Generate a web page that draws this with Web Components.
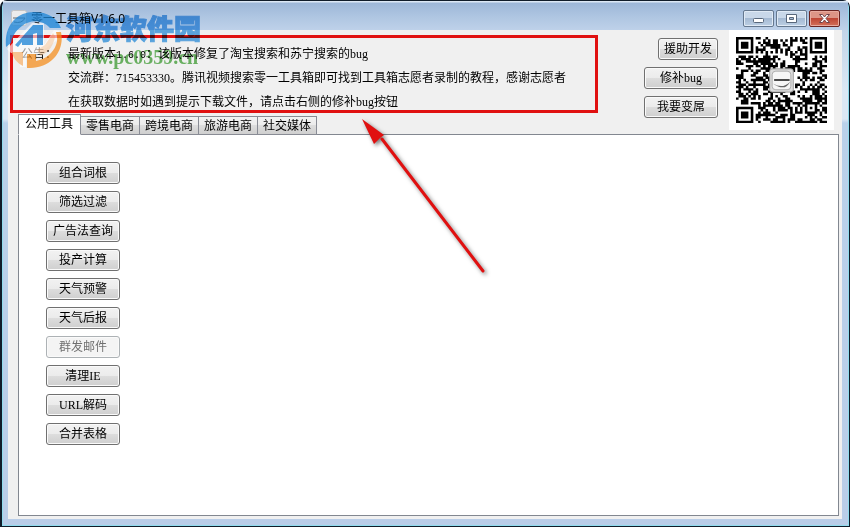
<!DOCTYPE html>
<html lang="zh-CN">
<head>
<meta charset="utf-8">
<title>零一工具箱V1.6.0</title>
<style>
  html, body {
    height: 100%;
    margin: 0;
  }
  body {
    font: 12px/16px "Liberation Serif", "Noto Sans CJK SC", serif;
    color: #000;
    overflow: hidden;
  }
  .actions {
    display: flex;
    flex-direction: column;
    align-items: flex-end;
    gap: 7px;
    padding: 8px 11px 0 0;
  }
  .tools {
    display: flex;
    flex-direction: column;
    align-items: flex-start;
    gap: 7px;
    padding: 27px;
  }
  .code {
    font: 10px/16px "Liberation Mono", monospace;
  }
</style>
</head>
<body>
  <app-window heading="零一工具箱V1.6.0">
    <notice-board slot="notice" label="公告：">
      <p>最新版本<span class="code">1.6.0</span>：该版本修复了淘宝搜索和苏宁搜索的bug</p>
      <p>交流群：715453330。腾讯视频搜索零一工具箱即可找到工具箱志愿者录制的教程，感谢志愿者</p>
      <p>在获取数据时如遇到提示下载文件，请点击右侧的修补bug按钮</p>
    </notice-board>
    <tab-strip slot="tabs" items="公用工具,零售电商,跨境电商,旅游电商,社交媒体"></tab-strip>
    <div class="actions" slot="actions">
      <push-button size="small">援助开发</push-button>
      <push-button>修补bug</push-button>
      <push-button>我要变屌</push-button>
    </div>
    <qr-code slot="code"></qr-code>
    <div class="tools">
      <push-button>组合词根</push-button>
      <push-button>筛选过滤</push-button>
      <push-button>广告法查询</push-button>
      <push-button>投产计算</push-button>
      <push-button>天气预警</push-button>
      <push-button>天气后报</push-button>
      <push-button disabled>群发邮件</push-button>
      <push-button>清理IE</push-button>
      <push-button>URL解码</push-button>
      <push-button>合并表格</push-button>
    </div>
  </app-window>
  <pointer-arrow></pointer-arrow>
  <site-watermark></site-watermark>

<script>
class AppWindow extends HTMLElement {
  constructor() {
    super();
    this.attachShadow({ mode: "open" });
    this.render();
  }

  render() {
    const style = `
    <style>
      :host {
        display: flex;
        flex-direction: column;
        box-sizing: border-box;
        height: 100vh;
        padding: 0 7px 7px 6px;
        border: 1px solid #101c2a;
        border-left-width: 2px;
        border-radius: 7px 7px 0 0;
        box-shadow: inset 0 0 0 1px #8fdcee;
        background: linear-gradient(#a3bedd, #c3d5e9 30px, #dbe7f4 90px, #dbe7f4 118px, #b9d1ea 122px, #b9cde8);
      }
      header {
        display: flex;
        align-items: center;
        height: 29px;
        flex: none;
        padding: 0 2px 0 1px;
        background: linear-gradient(#dce8f5 1px, #9db7d8 2px, #afc6e2 16px, #bed1e9);
        margin: 0 -6px 0 -5px;
      }
      h1 {
        flex: 1;
        margin: 6px 0 0 4px;
        font: 12px/16px "Noto Sans", "Noto Sans CJK SC", sans-serif;
      }
      .app-icon {
        margin: 4px 0 0 7px;
      }
      .controls {
        display: flex;
        gap: 2px;
        margin: 0 6px 0 0;
        align-self: flex-end;
        padding-bottom: 3px;
      }
      .controls button {
        width: 31px;
        height: 17px;
        padding: 0;
        border: 1px solid #65788f;
        border-radius: 2px;
        box-shadow: inset 0 0 0 1px #e0eaf5;
        background: linear-gradient(#c9d8e9 50%, #a5bad3 50%, #bccfe4);
      }
      .controls button.close {
        border-color: #6b2522;
        box-shadow: inset 0 0 0 1px #e8aa9e;
        background: linear-gradient(#dd9586 50%, #bf4634 50%, #d2705a);
      }
      .controls svg {
        display: block;
        margin: auto;
      }
      main {
        display: flex;
        flex-direction: column;
        flex: 1;
        min-height: 0;
        padding: 0 3px 3px 10px;
        background: #f0f0f0;
      }
      .top {
        display: grid;
        grid-template-columns: 1fr auto auto;
        height: 104px;
        flex: none;
        padding-right: 5px;
      }
      .left {
        display: flex;
        flex-direction: column;
        justify-content: space-between;
      }
      section {
        flex: 1;
        min-height: 0;
        border: 1px solid #828790;
        background: #fff;
      }
    </style>`;

    const template = `
    <header>
      <svg class="app-icon" width="16" height="16" viewBox="0 0 16 16">
        <rect x=".5" y=".5" width="15" height="15" rx="2" fill="#ececec" stroke="#c4c4c4"/>
        <path d="M2 8h12M3 12q8 2 11-4" fill="none" stroke="#666"/>
      </svg>
      <h1></h1>
      <div class="controls">
        <button aria-label="最小化"><svg width="13" height="11"><rect x="1.500" y="5.500" width="10" height="4" rx="1" fill="#fff" stroke="#58677b"/></svg></button>
        <button aria-label="最大化"><svg width="13" height="11"><path fill="#fff" stroke="#58677b" fill-rule="evenodd" d="M1.500 1.500h10v8h-10zM4.500 4.500h4v2h-4z"/></svg></button>
        <button class="close" aria-label="关闭"><svg width="13" height="11"><path d="M1.500 1.500h3l2 2.500 2-2.500h3l-3.500 4 3.500 4h-3l-2-2.500-2 2.500h-3l3.500-4z" fill="#fff" stroke="#70444a"/></svg></button>
      </div>
    </header>
    <main>
      <div class="top">
        <div class="left">
          <slot name="notice"></slot>
          <slot name="tabs"></slot>
        </div>
        <slot name="actions"></slot>
        <slot name="code"></slot>
      </div>
      <section><slot></slot></section>
    </main>`;

    this.shadowRoot.innerHTML = `${style} ${template}`;
    this.shadowRoot.querySelector("h1").textContent = this.getAttribute("heading");
  }
}

class NoticeBoard extends HTMLElement {
  constructor() {
    super();
    this.attachShadow({ mode: "open" });
    this.shadowRoot.innerHTML = `
    <style>
      :host {
        display: flex;
        box-sizing: border-box;
        height: 78px;
        margin: 5px 46px 0 -8px;
        padding: 4px 8px;
        border: 3px solid #e01010;
        line-height: 24px;
        white-space: nowrap;
      }
      .label {
        width: 47px;
        flex: none;
      }
      ::slotted(p) {
        margin: 0;
      }
    </style>
    <span class="label">${this.getAttribute("label")}</span>
    <div><slot></slot></div>`;
  }
}

class TabStrip extends HTMLElement {
  constructor() {
    super();
    this.attachShadow({ mode: "open" });
    this.render();
  }

  render() {
    const style = `
    <style>
      :host {
        display: block;
        position: relative;
        margin-bottom: -1px;
      }
      div {
        display: flex;
        align-items: flex-end;
      }
      button {
        height: 19px;
        padding: 0 5px;
        border: 1px solid #898c95;
        border-left-width: 0;
        background: linear-gradient(#f2f2f2, #ebebeb 50%, #dddddd 50%, #cfcfcf);
        font: inherit;
        color: #000;
      }
      button + button {
        padding-left: 5px;
      }
      button[aria-selected="true"] {
        height: 21px;
        padding: 0 7px 2px 6px;
        border-left-width: 1px;
        border-bottom-color: #fff;
        background: #fff;
      }
    </style>`;

    const tabs = this.getAttribute("items")
      .split(",")
      .map((item, index) => `<button role="tab" aria-selected="${index === 0}">${item}</button>`)
      .join("");

    this.shadowRoot.innerHTML = `${style}<div role="tablist">${tabs}</div>`;
    this.shadowRoot.querySelectorAll("button").forEach((tab) => {
      tab.addEventListener("click", () => this.select(tab));
    });
  }

  select(selected) {
    this.shadowRoot.querySelectorAll("button").forEach((tab) => {
      tab.setAttribute("aria-selected", tab === selected);
    });
  }
}

class PushButton extends HTMLElement {
  constructor() {
    super();
    this.attachShadow({ mode: "open" });
    this.shadowRoot.innerHTML = `
    <style>
      :host {
        display: block;
        width: 74px;
      }
      :host([size="small"]) {
        width: 60px;
      }
      button {
        display: block;
        width: 100%;
        height: 22px;
        padding: 0;
        border: 1px solid #707070;
        border-radius: 3px;
        box-shadow: inset 0 0 0 1px #fafafa;
        background: linear-gradient(#f2f2f2, #ebebeb 50%, #dddddd 50%, #cfcfcf);
        font: inherit;
        color: #000;
        white-space: nowrap;
      }
      button:active {
        background: #c8dceb;
      }
      button:disabled {
        border-color: #adb2b5;
        background: #f4f4f4;
        color: #707070;
      }
    </style>
    <button ${this.hasAttribute("disabled") ? "disabled" : ""}><slot></slot></button>`;
  }
}

class QrCode extends HTMLElement {
  size = 37;

  constructor() {
    super();
    this.attachShadow({ mode: "open" });
    this.shadowRoot.innerHTML = `
    <style>
      :host {
        display: block;
        box-sizing: border-box;
        width: 105px;
        height: 100px;
        padding: 7px;
        background: #fff;
      }
      svg {
        display: block;
        width: 100%;
        height: 100%;
      }
    </style>
    <svg viewBox="0 0 37 37" preserveAspectRatio="none" role="img">
      <path d="${this.modules()}"/>
      <rect x="13.700" y="13.700" width="9.600" height="10" rx="1" fill="#dcdcdc" stroke="#999" stroke-width=".4"/>
      <rect x="14.700" y="14.700" width="7.600" height="8" rx="1.500" fill="#f6f6f6" stroke="#aaa" stroke-width=".4"/>
      <path d="M15.500 18.500h6.300" fill="none" stroke="#222" stroke-width=".7"/>
      <path d="M15 20q4 2.600 7-.8-2 4.500-7 .8Z" fill="#666"/>
    </svg>`;
  }

  // distance in modules from the centre of a square mark
  distance(x, y, cx, cy) {
    return Math.max(Math.abs(x - cx), Math.abs(y - cy));
  }

  modules() {
    const last = this.size - 4;
    let seed = 359;
    let path = "";
    for (let y = 0; y < this.size; y++) {
      for (let x = 0; x < this.size; x++) {
        seed = (Math.imul(seed, 1664525) + 1013904223) >>> 0;
        const finder = Math.min(
          this.distance(x, y, 3, 3),
          this.distance(x, y, last, 3),
          this.distance(x, y, 3, last)
        );
        const align = this.distance(x, y, 30, 30);
        let dark = seed / 4294967296 < 0.53;
        if (finder <= 4) {
          dark = finder !== 2 && finder !== 4;
        } else if (align <= 2) {
          dark = align !== 1;
        } else if (x === 6 || y === 6) {
          dark = (x + y) % 2 === 0;
        }
        if (dark) path += `M${x} ${y}h1.050v1.050h-1.050z`;
      }
    }
    return path;
  }
}

class PointerArrow extends HTMLElement {
  constructor() {
    super();
    this.attachShadow({ mode: "open" });
    this.shadowRoot.innerHTML = `
    <style>
      :host {
        display: block;
        position: absolute;
        left: 356px;
        top: 114px;
        pointer-events: none;
      }
      svg {
        display: block;
        filter: drop-shadow(2px 2px 2px #0008);
      }
    </style>
    <svg width="136" height="166" viewBox="0 0 136 166">
      <path d="M26 25L127 157" stroke="#e01010" stroke-width="3" stroke-linecap="round"/>
      <path d="M6 5L28 21 24 24 18 30Z" fill="#e01010"/>
    </svg>`;
  }
}

class SiteWatermark extends HTMLElement {
  constructor() {
    super();
    this.attachShadow({ mode: "open" });
    this.shadowRoot.innerHTML = `
    <style>
      :host {
        display: flex;
        position: absolute;
        left: 5px;
        top: 11px;
        gap: 4px;
        pointer-events: none;
      }
      .name,
      .site {
        mix-blend-mode: multiply;
      }
      .name {
        font: 900 27px/34px "Noto Sans CJK SC", sans-serif;
        color: #3598e5;
        -webkit-text-stroke: 1px #3598e5;
        opacity: .8;
      }
      .site {
        font: bold 20px/24px "Liberation Serif", serif;
        color: #4aa83f;
        opacity: .8;
      }
      svg {
        opacity: .75;
      }
    </style>
    <svg width="57" height="58" viewBox="0 0 57 58">
      <path d="M2 38L27 12h12v22l10-15 5 1-2 9-24 18h-7v9h-6V42H6Z" fill="#fff" opacity=".8"/>
      <path d="M1 36C-1 14 12 1 29 1c14 0 23 6 27 16H45C38 9 26 8 17 15 10 20 7 26 6 32Z" fill="#1c86d8"/>
      <path d="M10 34L28 14h10v20h-6V22l-4 1v11H17v-3l-4 5Z" fill="#1c86d8"/>
      <path d="M56 21C60 39 47 57 25 57h-3V43h9v7c10-2 17-8 20-16 2-5 1-9 0-13Z" fill="#f58f20"/>
      <path d="M7 41h11v14C12 52 8 47 7 41Z" fill="#f8b470"/>
      <path d="M40 34l8-12 2 3c-1 9-6 16-14 20l-4-6Z" fill="#f8b470" opacity=".5"/>
    </svg>
    <div>
      <div class="name">河东软件园</div>
      <div class="site">www.pc0359.cn</div>
    </div>`;
  }
}

customElements.define("app-window", AppWindow);
customElements.define("notice-board", NoticeBoard);
customElements.define("tab-strip", TabStrip);
customElements.define("push-button", PushButton);
customElements.define("qr-code", QrCode);
customElements.define("pointer-arrow", PointerArrow);
customElements.define("site-watermark", SiteWatermark);
</script>
</body>
</html>
